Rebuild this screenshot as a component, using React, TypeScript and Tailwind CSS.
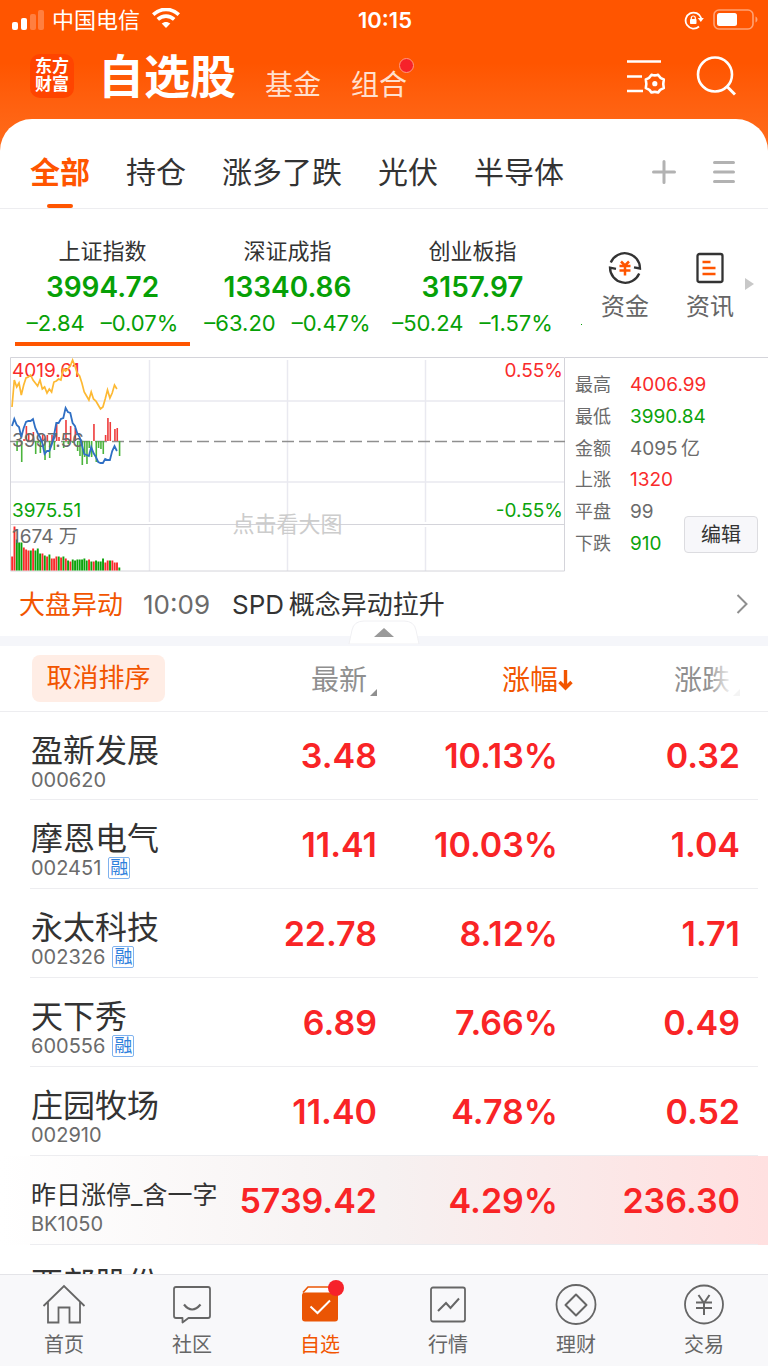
import { useState } from 'react';
import clsx from 'clsx';

interface Stock {
  name: string;
  code: string;
  price: string;
  percent: string;
  diff: string;
  margin?: boolean;
  active?: boolean;
}

const groups = ['全部', '持仓', '涨多了跌', '光伏', '半导体'];

const indices = [
  { name: '上证指数', value: '3994.72', diff: '–2.84', percent: '–0.07%' },
  { name: '深证成指', value: '13340.86', diff: '–63.20', percent: '–0.47%' },
  { name: '创业板指', value: '3157.97', diff: '–50.24', percent: '–1.57%' },
];

const stats = [
  { label: '最高', value: '4006.99', color: 'text-[#f92b2b]' },
  { label: '最低', value: '3990.84', color: 'text-[#0ba30b]' },
  { label: '金额', value: '4095\u2009亿', color: 'text-[#6b6b6b]' },
  { label: '上涨', value: '1320', color: 'text-[#f92b2b]' },
  { label: '平盘', value: '99', color: 'text-[#6b6b6b]' },
  { label: '下跌', value: '910', color: 'text-[#0ba30b]' },
];

const stocks: Stock[] = [
  { name: '盈新发展', code: '000620', price: '3.48', percent: '10.13%', diff: '0.32' },
  { name: '摩恩电气', code: '002451', price: '11.41', percent: '10.03%', diff: '1.04', margin: true },
  { name: '永太科技', code: '002326', price: '22.78', percent: '8.12%', diff: '1.71', margin: true },
  { name: '天下秀', code: '600556', price: '6.89', percent: '7.66%', diff: '0.49', margin: true },
  { name: '庄园牧场', code: '002910', price: '11.40', percent: '4.78%', diff: '0.52' },
  { name: '昨日涨停_含一字', code: 'BK1050', price: '5739.42', percent: '4.29%', diff: '236.30', active: true },
  { name: '西部股份', code: '', price: '', percent: '', diff: '' },
];

// 分时图数据，每 2.33px 一个点
const STEP = 2.33;
const avgLine = [50, 23, 30, 26, 38, 28, 21, 20, 18, 23, 26, 29, 23, 32, 30, 36, 32, 35, 25, 24, 22, 23, 12, 14, 12, 9, 3, 9, 16, 19, 26, 35, 39, 43, 35, 42, 44, 48, 52, 50, 42, 33, 41, 36, 28, 32];
const priceLine = [69, 62, 68, 70, 80, 71, 65, 64, 64, 62, 71, 76, 80, 86, 97, 94, 94, 88, 79, 66, 66, 62, 61, 51, 55, 56, 66, 69, 76, 80, 88, 97, 98, 99, 90, 96, 100, 105, 106, 106, 102, 103, 103, 94, 89, 94];
const momentum = [0, 0, -10, 0, -21, 2, 15, 8, 0, 9, -13, -2, -12, 6, -19, 6, -17, 6, -9, 17, 4, 0, -7, 21, -3, 15, -2, 13, -10, -15, -24, -16, -23, -7, -16, 17, -21, -7, -8, -13, 6, 23, 19, 0, 12, 13, -15];
const volume = [14, 44, -31, -28, -28, 23, 21, 20, -20, 22, -20, -22, -17, 17, -15, 14, -16, 12, 12, 14, -14, 13, -14, 12, -10, 9, -11, -10, -11, -11, -11, -12, -10, 11, -9, 9, -10, -9, -9, -12, 8, 10, -10, 10, 8, 8, -3];

const toPoints = (ys: number[]) => ys.map((y, i) => `${(2 + i * STEP).toFixed(1)},${y}`).join(' ');

function StatusBar() {
  return (
    <div className="grid h-10 grid-cols-3 items-center pr-[10px] pl-3 text-[22px] leading-[30px]">
      <div className="flex items-center gap-2">
        <svg className="h-5 w-8" viewBox="0 0 32 20" fill="#fff">
          <rect x="0" y="12" width="6" height="8" rx="2" />
          <rect x="9" y="8" width="6" height="12" rx="2" />
          <rect x="18" y="4" width="6" height="16" rx="2" opacity=".25" />
          <rect x="26" y="0" width="6" height="20" rx="2" opacity=".25" />
        </svg>
        <span>中国电信</span>
        <svg className="mb-1 ml-1 h-5 w-7" viewBox="0 0 28 20" fill="none" stroke="#fff" strokeWidth="3.6">
          <path d="M1.2 6.6C8.5-.4 19.5-.4 26.8 6.6" />
          <path d="M5.8 11.4C10.5 7 17.5 7 22.2 11.4" />
          <path d="M14 20l-4.3-4.4c2.4-2.2 6.2-2.2 8.6 0z" fill="#fff" stroke="none" />
        </svg>
      </div>
      <div className="text-center font-semibold">10:15</div>
      <div className="flex items-center justify-end gap-[9px]">
        <svg className="h-5 w-5" viewBox="0 0 20 20" fill="none" stroke="#fff" strokeWidth="1.8">
          <path d="M15 16.5A8 8 0 1 1 17.2 8" />
          <path d="M13.8 8h6l-3 4z" fill="#fff" stroke="none" />
          <rect x="6" y="9" width="6.5" height="5" rx=".8" fill="#fff" stroke="none" />
          <path d="M7.3 9.5V8a2 2 0 0 1 4 0v1.500" strokeWidth="1.2" />
        </svg>
        <svg className="h-[22px] w-[45px]" viewBox="0 0 45 22">
          <rect x="1" y="1" width="39" height="19" rx="5" fill="none" stroke="#fff" strokeOpacity=".45" strokeWidth="1.6" />
          <rect x="4" y="4" width="20" height="13" rx="2.5" fill="#fff" />
          <path d="M42.5 7.5c2.6 1 2.6 5 0 6z" fill="#fff" fillOpacity=".45" />
        </svg>
      </div>
    </div>
  );
}

function Header() {
  return (
    <div className="flex h-[79px] items-start pr-8 pl-[30px]">
      <div className="mt-[14px] flex h-11 w-11 flex-col items-center justify-center rounded-[10px] bg-[#ff4400] font-['Liberation_Serif','Noto_Sans_CJK_SC',serif] text-[17px] leading-[18px] font-bold">
        <span>东方</span>
        <span>财富</span>
      </div>
      <nav className="ml-6 flex items-end">
        <button className="text-[46px] leading-[72px] font-bold">自选股</button>
        <button className="ml-[29px] text-[28px] leading-[54px] text-[#ffe0cf]">基金</button>
        <button className="relative ml-[30px] text-[28px] leading-[54px] text-[#ffe0cf]">
          组合
          <span className="absolute top-0 -right-[7px] h-[15px] w-[15px] rounded-full border border-[#ff9a80] bg-[#f6222a]" />
        </button>
      </nav>
      <div className="mt-4 ml-auto flex gap-[30px]">
        <button aria-label="设置">
          <svg className="h-10 w-10" viewBox="0 0 40 40" fill="none" stroke="#fff" strokeWidth="2.6">
            <path d="M1 5.500h34M1 20.500h15M1 35h16" />
            <path
              d="M25.500 18.800Q28.800 20 32.100 18.800Q33.800 22 37.800 23.500Q36.800 27.700 37.800 32Q33.800 33.400 32.100 36.500Q28.800 35.300 25.500 36.500Q23.800 33.400 19.800 32Q20.800 27.700 19.800 23.500Q23.800 22 25.500 18.800z"
              strokeLinejoin="round"
            />
            <circle cx="28.8" cy="27.7" r="2.6" fill="#fff" stroke="none" />
          </svg>
        </button>
        <button aria-label="搜索">
          <svg className="h-10 w-10" viewBox="0 0 40 40" fill="none" stroke="#fff" strokeWidth="2.6">
            <circle cx="19" cy="18.5" r="17" />
            <path d="M31 30.500l8 8" strokeWidth="3" />
          </svg>
        </button>
      </div>
    </div>
  );
}

function GroupTabs() {
  const [current, setCurrent] = useState('全部');
  return (
    <div className="flex h-[90px] items-center border-b border-[#ededf0] pr-8 pl-[30px]">
      <div className="flex h-full gap-9">
        {groups.map((g) => (
          <button
            key={g}
            onClick={() => setCurrent(g)}
            className={clsx(
              'relative h-full pt-4 text-[30px] leading-[44px] whitespace-nowrap',
              g === current ? 'font-bold text-[#ff5500]' : 'text-[#333333]'
            )}
          >
            {g}
            {g === current && (
              <span className="absolute bottom-0 left-1/2 h-1 w-[26px] -translate-x-1/2 rounded-sm bg-[#ff5500]" />
            )}
          </button>
        ))}
      </div>
      <div className="mt-4 ml-auto flex gap-9">
        <button aria-label="添加">
          <svg className="h-6 w-6" viewBox="0 0 24 24" stroke="#b2b2b2" strokeWidth="3" strokeLinecap="round">
            <path d="M12 1.500v21M1.500 12h21" />
          </svg>
        </button>
        <button aria-label="管理">
          <svg className="h-6 w-6" viewBox="0 0 24 24" stroke="#b2b2b2" strokeWidth="3" strokeLinecap="round">
            <path d="M2.500 2.500h19M2.500 12h19M2.500 21.500h19" />
          </svg>
        </button>
      </div>
    </div>
  );
}

function IndexStrip() {
  return (
    <div className="flex h-[148px] pt-6">
      <div className="grid flex-1 grid-cols-3 pl-[10px] text-center">
        {indices.map((item, i) => (
          <button key={item.name} className="flex flex-col items-center px-[5px]">
            <span className="text-[22px] leading-9 text-[#333333]">{item.name}</span>
            <span className="text-[28px] leading-9 font-semibold text-[#06a006]">{item.value}</span>
            <span className="flex gap-4 text-[22px] leading-9 whitespace-nowrap text-[#06a006]">
              <span>{item.diff}</span>
              <span>{item.percent}</span>
            </span>
            {i === 0 && <span className="mt-px h-1 w-full bg-[#ff5500]" />}
          </button>
        ))}
      </div>
      <span className="mt-[91px] ml-4 h-px w-px bg-[#06a006]" />
      <div className="flex items-start pt-[18px] pr-[13px] pl-[19px] text-[24px] leading-9 text-[#666666]">
        <button className="flex w-12 flex-col items-center gap-1">
          <svg className="h-[34px] w-[34px]" viewBox="0 0 34 34" fill="none" stroke="#333" strokeWidth="2.3">
            <path d="M2.8 11.500A15.200 15.200 0 0 1 32 17.500l-6-1.200" />
            <path d="M31.200 22.500A15.200 15.200 0 0 1 2 16.700l6 1.200" />
            <path d="M13 10.500l4 4 4-4M11.500 15h11M11.500 19.500h11M17 14.500v10" stroke="#ff5500" strokeWidth="2.5" />
          </svg>
          <span className="whitespace-nowrap">资金</span>
        </button>
        <button className="ml-[37px] flex w-12 flex-col items-center gap-1">
          <svg className="h-[34px] w-[34px]" viewBox="0 0 34 34" fill="none" stroke="#333" strokeWidth="2.3">
            <rect x="4.5" y="3" width="25" height="28" rx="2" />
            <path d="M9.500 11h8M9.500 17h13M9.500 23h13" stroke="#ff5500" strokeWidth="2.6" />
          </svg>
          <span className="whitespace-nowrap">资讯</span>
        </button>
        <svg className="mt-[27px] ml-[11px] h-3 w-[10px]" viewBox="0 0 10 12" fill="#c8c8c8">
          <path d="M0 0l9 6-9 6z" />
        </svg>
      </div>
    </div>
  );
}

function MinuteChart() {
  return (
    <div className="relative h-[215px] flex-1 text-[19px] leading-6">
      <svg className="absolute inset-0 h-full w-full" viewBox="0 0 555 215" preserveAspectRatio="none" fill="none">
        <path d="M0 44h555M0 125h555M139.500 3v162M277.500 3v162M415.500 3v162M139.500 170v44M277.500 170v44M415.500 170v44" stroke="#e9e9f0" strokeWidth="1.5" />
        <path d="M0 167.500h555" stroke="#d4d4da" />
        <path d="M.5 .5h554v213.500H.5z" stroke="#d4d4da" />
        <path d="M0 84.500h555" stroke="#8f8f8f" strokeWidth="1.3" strokeDasharray="12 5" />
        {momentum.map((v, i) => (
          <rect
            key={i}
            x={1.6 + i * STEP}
            y={v > 0 ? 84 - v : 84}
            width="1.6"
            height={Math.abs(v)}
            fill={v > 0 ? '#ee3b3b' : '#4bb43c'}
          />
        ))}
        {volume.map((v, i) => (
          <rect
            key={i}
            x={1.2 + i * STEP}
            y={213.5 - Math.abs(v)}
            width="1.9"
            height={Math.abs(v)}
            fill={v > 0 ? '#f92b2b' : '#0ba30b'}
          />
        ))}
      </svg>
      <span className="absolute top-0.5 left-0.5 text-[#f92b2b]">4019.61</span>
      <span className="absolute top-[72px] left-0.5 text-[#6b6b6b]">3997.56</span>
      <span className="absolute top-[142px] left-0.5 text-[#0ba30b]">3975.51</span>
      <span className="absolute top-[168px] left-0.5 text-[#6b6b6b]">1674 万</span>
      <span className="absolute top-0.5 right-0.5 text-[#f92b2b]">0.55%</span>
      <span className="absolute top-[142px] right-0.5 text-[#0ba30b]">-0.55%</span>
      <span className="absolute top-[155px] w-full text-center text-[22px] text-[#cccccc]">点击看大图</span>
      <svg className="absolute inset-0 h-full w-full" viewBox="0 0 555 215" preserveAspectRatio="none" fill="none">
        <polyline points={toPoints(avgLine)} stroke="#fdb933" strokeWidth="1.7" />
        <polyline points={toPoints(priceLine)} stroke="#2f6fc4" strokeWidth="1.8" />
      </svg>
    </div>
  );
}

function MarketPanel() {
  return (
    <div className="relative ml-[10px] flex">
      <MinuteChart />
      <dl className="flex w-[203px] flex-col justify-between border-t border-[#d4d4da] pt-[14px] pb-4 pl-[10px] text-[19px] leading-[25px]">
        {stats.map((s) => (
          <div key={s.label} className="flex">
            <dt className="w-[55px] text-[18px] text-[#6b6b6b]">{s.label}</dt>
            <dd className={s.color}>{s.value}</dd>
          </div>
        ))}
      </dl>
      <button className="absolute right-[10px] bottom-[19px] h-[37px] w-[74px] rounded border border-[#dcdce0] bg-[#f7f7fa] text-[20px] text-[#333333]">
        编辑
      </button>
    </div>
  );
}

function NewsBar() {
  return (
    <>
      <a href="#news" className="flex h-16 items-center pr-5 pl-[19px] text-[26px]">
        <span className="text-[#f25500]">大盘异动</span>
        <span className="ml-5 text-[#6b6b6b]">10:09</span>
        <span className="ml-[22px] text-[#333333]">SPD{'\u2009'}概念异动拉升</span>
        <svg className="ml-auto h-5 w-3" viewBox="0 0 12 20" fill="none" stroke="#8f8f8f" strokeWidth="2">
          <path d="M1.500 1l9 9-9 9" />
        </svg>
      </a>
      <div className="relative h-[10px] bg-[#f5f6fa]">
        <button aria-label="收起" className="absolute -top-[16px] left-1/2 h-6 w-[72px] -translate-x-1/2">
          <svg className="h-6 w-[72px]" viewBox="0 0 72 24">
            <path d="M1 24L4 10Q6 1 16 1h40q10 0 12 9l3 14z" fill="#fff" stroke="#f0f0f3" />
            <path d="M26 17l10-9 10 9z" fill="#999" />
          </svg>
        </button>
      </div>
    </>
  );
}

function Corner() {
  return (
    <svg className="mb-1 ml-[3px] h-[7px] w-[7px]" viewBox="0 0 7 7" fill="#8f8f8f">
      <path d="M7 0v7H0z" />
    </svg>
  );
}

function StockTable() {
  return (
    <table className="w-full table-fixed">
      <colgroup>
        <col />
        <col className="w-[150px]" />
        <col className="w-[181px]" />
        <col className="w-[210px]" />
      </colgroup>
      <thead>
        <tr className="h-[65px] border-b border-[#ededf0] text-[28px] leading-10 text-[#8f8f8f]">
          <th className="pl-8 text-left font-normal">
            <button className="block h-[47px] w-[133px] rounded-lg bg-[#ffede5] text-[26px] text-[#f25500]">取消排序</button>
          </th>
          <th className="pt-1 font-normal">
            <button className="ml-auto flex items-end">
              最新
              <Corner />
            </button>
          </th>
          <th className="pt-1 font-normal">
            <button className="relative ml-auto block text-[#f25500]">
              涨幅
              <svg className="absolute top-[9px] left-full h-[22px] w-[15px]" viewBox="0 0 15 22" fill="none" stroke="#f25500" strokeWidth="3.4">
                <path d="M7.500 1v18M1.500 13l6 6 6-6" />
              </svg>
            </button>
          </th>
          <th className="pt-1 pr-7 font-normal">
            <button className="relative ml-auto flex items-end">
              涨跌
              <Corner />
              <span className="absolute inset-y-0 right-0 w-8 bg-linear-to-r from-white/0 to-white/90 to-70%" />
            </button>
          </th>
        </tr>
      </thead>
      <tbody>
        {stocks.map((s) => (
          <tr
            key={s.name}
            className={clsx(
              'relative h-[89px] text-right text-[34px] font-semibold text-[#f92426]',
              s.active && 'bg-linear-to-r from-white via-[#f6f1f1] to-[#ffe0e0]'
            )}
          >
            <td className="pt-[21px] pl-[31px] text-left align-top font-normal whitespace-nowrap">
              <div className={clsx('leading-9 text-[#333333]', s.active ? 'text-[25px]' : 'text-[32px]')}>{s.name}</div>
              <div className="flex items-center gap-[7px] text-[20px] leading-[22px] text-[#6b6b6b]">
                {s.code}
                {s.margin && (
                  <span className="flex h-[22px] w-[22px] shrink-0 items-center justify-center rounded-xs border border-[#7fb2ee] text-[18px] text-[#2f80dc]">
                    融
                  </span>
                )}
              </div>
              {/* 行分隔线，左右缩进 */}
              <span className="absolute right-[10px] bottom-0 left-[30px] h-px bg-[#ededf0]" />
            </td>
            <td>{s.price}</td>
            <td>{s.percent}</td>
            <td className="pr-7">{s.diff}</td>
          </tr>
        ))}
      </tbody>
    </table>
  );
}

function TabBar() {
  return (
    <nav className="grid shrink-0 grid-cols-6 border-t border-[#e4e4e8] bg-[#f8f8fa] text-[20px] leading-7 text-[#666666]">
      <a href="#home" className="flex flex-col items-center gap-1 pt-2 pb-[7px]">
        <svg className="h-11 w-11" viewBox="0 0 44 44" fill="none" stroke="#666" strokeWidth="1.8">
          <path d="M1.500 23L22 3l20.500 20M6 19v20.500h10.500v-15h11v15H38V19" />
        </svg>
        首页
      </a>
      <a href="#community" className="flex flex-col items-center gap-1 pt-2 pb-[7px]">
        <svg className="h-11 w-11" viewBox="0 0 44 44" fill="none" stroke="#666" strokeWidth="1.8" strokeLinejoin="round">
          <path d="M6 4h32q2 0 2 2v27q0 2-2 2H18.500l-6 4.500V35H6q-2 0-2-2V6q0-2 2-2z" />
          <path d="M14 21.500q8 10 16.500 0" strokeWidth="2.2" />
        </svg>
        社区
      </a>
      <a href="#watchlist" className="relative flex flex-col items-center gap-1 pt-2 pb-[7px] text-[#f25500]">
        <svg className="h-11 w-11" viewBox="0 0 44 44" fill="none">
          <path d="M5 9.500L10 4h24l5.500 5.500" fill="#fff" stroke="#ea5504" strokeWidth="1.6" />
          <rect x="4" y="9.5" width="36" height="29" rx="3" fill="#ea5504" />
          <path d="M12.500 23.500l7 6.500L32 17.500" stroke="#fff" strokeWidth="2" />
        </svg>
        <span className="absolute top-[5px] left-1/2 ml-2 h-4 w-4 rounded-full bg-[#f6222a]" />
        自选
      </a>
      <a href="#quotes" className="flex flex-col items-center gap-1 pt-2 pb-[7px]">
        <svg className="h-11 w-11" viewBox="0 0 44 44" fill="none" stroke="#666" strokeWidth="1.8">
          <rect x="5" y="4.5" width="34" height="34" rx="2" />
          <path d="M12 28l8-8 4.500 5L33 15.500" strokeWidth="2" />
        </svg>
        行情
      </a>
      <a href="#wealth" className="flex flex-col items-center gap-1 pt-2 pb-[7px]">
        <svg className="h-11 w-11" viewBox="0 0 44 44" fill="none" stroke="#666" strokeWidth="1.8" strokeLinejoin="round">
          <circle cx="22" cy="21.5" r="19.5" />
          <path d="M22 11.500l10.500 10.500L22 32.500 11.500 22z" strokeWidth="2" />
        </svg>
        理财
      </a>
      <a href="#trade" className="flex flex-col items-center gap-1 pt-2 pb-[7px]">
        <svg className="h-11 w-11" viewBox="0 0 44 44" fill="none" stroke="#666" strokeWidth="1.8">
          <circle cx="22" cy="21.5" r="19" />
          <path d="M16.500 12l5.500 8 5.500-8M14 19.500h16M14 25h16M22 20v12" strokeWidth="2" />
        </svg>
        交易
      </a>
    </nav>
  );
}

export default function App() {
  return (
    <div className="flex h-screen flex-col bg-white font-['Inter','Noto_Sans_CJK_SC',sans-serif]">
      <div className="bg-linear-to-b from-[#ff5500] from-30% to-[#ff7a26] text-white">
        <StatusBar />
        <Header />
        <div className="rounded-t-[32px] bg-white">
          <GroupTabs />
        </div>
      </div>
      <main className="min-h-0 flex-1 overflow-hidden">
        <IndexStrip />
        <MarketPanel />
        <NewsBar />
        <StockTable />
      </main>
      <TabBar />
    </div>
  );
}
